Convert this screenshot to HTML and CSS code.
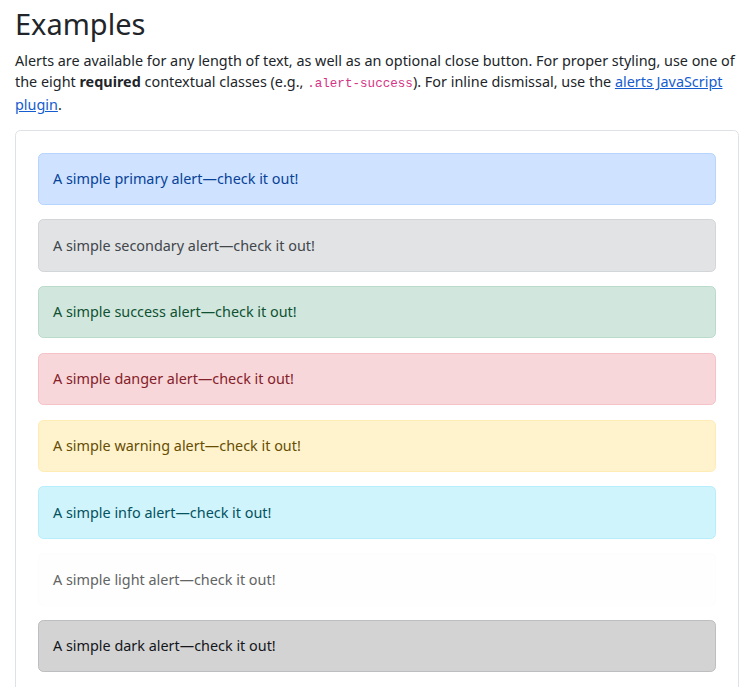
FILE: index.html
```html
<!DOCTYPE html>
<html lang="en">
<head>
<meta charset="utf-8">
<title>Alerts</title>
<link rel="stylesheet" href="styles.css">
</head>
<body>
<main class="content">
  <h2 class="title">Examples</h2>
  <p class="lead-text">Alerts are available for any length of text, as well as an optional close button. For proper styling, use one of the eight <strong>required</strong> contextual classes (e.g., <code>.alert-success</code>). For inline dismissal, use the <a href="#">alerts JavaScript plugin</a>.</p>
  <div class="example">
    <div class="alert alert-primary">A simple primary alert—check it out!</div>
    <div class="alert alert-secondary">A simple secondary alert—check it out!</div>
    <div class="alert alert-success">A simple success alert—check it out!</div>
    <div class="alert alert-danger">A simple danger alert—check it out!</div>
    <div class="alert alert-warning">A simple warning alert—check it out!</div>
    <div class="alert alert-info">A simple info alert—check it out!</div>
    <div class="alert alert-light">A simple light alert—check it out!</div>
    <div class="alert alert-dark">A simple dark alert—check it out!</div>
  </div>
</main>
</body>
</html>
```

FILE: styles.css
```css
html, body {
  margin: 0;
  padding: 0;
  background: #fff;
}
body {
  font-family: "Noto Sans", "Open Sans", sans-serif;
  font-size: 14.4px;
  line-height: 1.5;
  color: #212529;
}
.content {
  padding: 7px 15px 0 15px;
}
.title {
  margin: 0 0 8px 0;
  font-size: 29px;
  font-weight: 400;
  line-height: 1.2;
}
.lead-text {
  margin: 0 0 14px 0;
  line-height: 1.5;
}
.lead-text strong {
  font-weight: 700;
}
code {
  font-family: "Liberation Mono", "Courier New", monospace;
  font-size: 12.6px;
  color: #d63384;
}
a {
  color: #155ccf;
  text-decoration: underline;
}
.example {
  border: 1px solid #dee2e6;
  border-radius: 5.4px;
  padding: 21.6px;
}
.alert {
  padding: 14.4px;
  margin-bottom: 14.4px;
  border: 1px solid transparent;
  border-radius: 5.4px;
}
.alert-primary { color: #084298; background: #cfe2ff; border-color: #b6d4fe; }
.alert-secondary { color: #41464b; background: #e2e3e5; border-color: #d3d6d8; }
.alert-success { color: #0f5132; background: #d1e7dd; border-color: #badbcc; }
.alert-danger { color: #842029; background: #f8d7da; border-color: #f5c2c7; }
.alert-warning { color: #664d03; background: #fff3cd; border-color: #ffecb5; }
.alert-info { color: #055160; background: #cff4fc; border-color: #b6effb; }
.alert-light { color: #636464; background: #fefefe; border-color: #fdfdfe; }
.alert-dark { color: #141619; background: #d3d3d4; border-color: #bcbebf; }
```
